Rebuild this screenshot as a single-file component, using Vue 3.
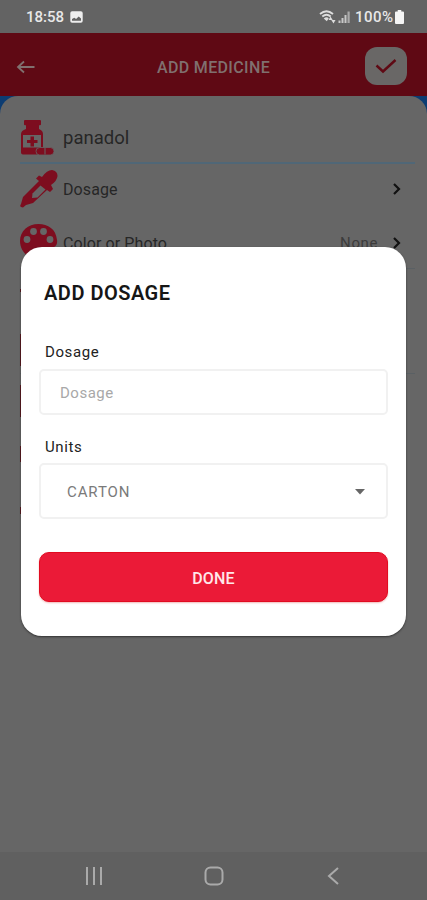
<script setup>
import { ref } from 'vue'

const dosage = ref('')
const rows = [
  { label: 'Dosage', value: '', icon: 'dropper' },
  { label: 'Color or Photo', value: 'None', icon: 'palette' },
]
const hiddenRows = [
  { top: 289, height: 3 },
  { top: 334, height: 32 },
  { top: 385, height: 32 },
  { top: 446, height: 16 },
  { top: 507, height: 7 },
]
</script>

<template>
  <div class="screen">
    <header class="status">
      <span class="clock">18:58</span>
      <svg class="pic" viewBox="0 0 13 12"><rect x=".3" y=".2" width="12.4" height="11.6" rx="1.8" fill="#eee" /><path d="M2 9.700V8l2.300-1.200 1.800 1.200L8.700 5.600 11 7.500v2.200z" fill="#636363" /></svg>
      <span class="grow"></span>
      <svg class="signals" viewBox="0 0 33 16">
        <g fill="none" stroke="#ddd" stroke-width="1.8">
          <path d="M1 5Q7.500-.6 14 5M3.300 7.500Q7.500 4 11.700 7.500" />
        </g>
        <path d="M4.700 9.500Q7.500 7 9.800 9.200L7.800 12.200zM11.500 7.500l2.200 3.500H9.500zM14.500 14.500l-2.200-3.500h4.200z" fill="#ddd" />
        <path d="M19.500 11.500h2V14h-2zM22.500 9h2v5h-2zM25.500 6h2v8h-2z" fill="#c8c8c8" /><path d="M28.500 2.500h2.200V14h-2.200z" fill="#aaa" />
      </svg>
      <span class="percent">100%</span>
      <svg class="battery" viewBox="0 0 9 14"><path d="M2.700 0h3.600v1.600H8q1 0 1 1V13q0 1-1 1H1q-1 0-1-1V2.600q0-1 1-1h1.700z" fill="#f5f5f5" /></svg>
    </header>

    <div class="toolbar">
      <svg class="back" viewBox="0 0 20 16"><path d="M18.500 8H2M8 2.500 2 8l6 5.500" /></svg>
      <h1>ADD MEDICINE</h1>
      <button class="confirm"><svg viewBox="0 0 24 20"><path d="m2.500 9.500 6.500 6L21.500 4" /></svg></button>
    </div>

    <div class="body">
      <main class="sheet">
        <div class="name-row">
          <svg class="icon bottle" viewBox="0 0 34 36">
            <path d="M5 0h15q1 0 1 1.300v3q0 1-1 1H5q-1 0-1-1v-3Q4 0 5 0zM6 5h13v4q4 1.500 4 5v20.500H3q-2 0-2-2V14q0-3.500 5-5z" />
            <path d="M3 15h18v12.500H3z" fill="#666" /><path d="M10.500 16.500H14V20h3.500v3H14v3.500h-3.500V23H7v-3h3.500z" />
            <rect x="16" y="27.500" width="18" height="7.500" rx="3.700" stroke="#666" stroke-width=".8" /><path d="M25 28v6.500" stroke="#666" />
          </svg>
          <span class="name">panadol</span>
        </div>
        <div v-for="row in rows" :key="row.label" class="row" :class="row.icon">
          <svg v-if="row.icon === 'dropper'" class="icon" viewBox="0 0 38 38">
            <path d="M1 37q-1.500-1 0-3l2-7L19 11l-3-2.500 3-3 3 1.500q5-7 10-7 5.500 1 5.500 6-.5 5-6.500 9l2 4-3 3-3-2-14 13-7 2-3 2.500z" />
            <path d="m20.500 15.500 5 4-8 8-5.500.5.500-4.500z" fill="#666" />
          </svg>
          <svg v-else class="icon" viewBox="0 0 38 38">
            <path d="M18.500 0C8 0 0 7 0 17s8 18 18 18c5 0 4-4 3-6-1-4 2-5 6-5 6 0 11-1 10-8C36 5 28 0 18.500 0z" />
            <g fill="#666"><circle cx="7" cy="15.500" r="3.400" /><circle cx="13.500" cy="7.500" r="3.400" /><circle cx="23.500" cy="7.500" r="3.400" /><circle cx="30" cy="15.500" r="3.400" /></g>
          </svg>
          <span class="label">{{ row.label }}</span>
          <span class="value">{{ row.value }}</span>
          <svg class="chevron" viewBox="0 0 8 12"><path d="m1 1 5 5-5 5" /></svg>
        </div>
        <div class="rest"></div>
      </main>
    </div>

    <nav>
      <svg viewBox="0 0 20 20"><path d="M3 1v18M10 1v18M17 1v18" /></svg>
      <svg viewBox="0 0 20 20"><rect x="1.500" y="1.500" width="17" height="17" rx="5" /></svg>
      <svg viewBox="0 0 20 20"><path d="m15 2-9 8 9 8" /></svg>
    </nav>

    <i v-for="item in hiddenRows" :key="item.top" class="sliver" :style="{ top: item.top + 'px', height: item.height + 'px' }"></i>

    <section class="dialog">
      <h2>ADD DOSAGE</h2>
      <label for="dose">Dosage</label>
      <input id="dose" v-model="dosage" placeholder="Dosage">
      <label class="units">Units</label>
      <div class="select">
        <span>CARTON</span>
        <svg viewBox="0 0 10 6"><path d="M0 0h10L5 5.500z" /></svg>
      </div>
      <button class="done">DONE</button>
    </section>
  </div>
</template>

<style>
body { margin: 0; }
</style>

<style scoped>
* { box-sizing: border-box; }
.screen { position: relative; width: 427px; height: 900px; display: flex; flex-direction: column; overflow: hidden; background: #666; font-family: Roboto, "Liberation Sans", sans-serif; }
svg { flex: none; }
.grow { flex: 1; }
.status { height: 33px; display: flex; align-items: center; padding: 1px 23.500px 0 26px; background: #636363; color: #e8e8e8; font-size: 15px; font-weight: 500; }
.pic { width: 13px; height: 12px; margin-left: 6px; }
.signals { width: 33px; height: 16px; margin-right: 3px; }
.percent { letter-spacing: .5px; }
.battery { width: 9px; height: 14px; margin-left: 1px; }
.toolbar { height: 63px; display: flex; align-items: center; padding: 3px 20px 0 16px; background: #5f0914; }
.back { width: 20px; height: 16px; margin-top: 1px; fill: none; stroke: #80706f; stroke-width: 1.800; }
h1 { flex: 1; margin: 2px 0 0 26px; text-align: center; font-size: 16px; font-weight: 500; letter-spacing: .35px; color: #80706f; }
.confirm { width: 42px; height: 38px; display: grid; place-items: center; padding: 0; border: 0; border-radius: 12px; background: #696766; }
.confirm svg { width: 24px; height: 20px; fill: none; stroke: #5f0914; stroke-width: 2.400; }
.body { flex: 1; background: linear-gradient(#0c3c72 0 30px, #666 30px); }
.sheet { height: 100%; border-radius: 18px 18px 0 0; background: #666; padding: 0 12px 0 20px; }
.icon { width: 38px; height: 38px; fill: #7d0d1f; }
.name-row { height: 68px; display: flex; align-items: center; padding-top: 17px; border-bottom: 2px solid #506777; }
.bottle { width: 34px; height: 36px; margin-right: 9px; }
.name { font-size: 18.500px; color: #262626; }
.row { height: 50px; display: flex; align-items: center; padding-right: 14px; }
.palette { height: 55px; border-bottom: 1px solid #5a6064; padding-top: 4px; }
.label { margin-left: 5px; font-size: 16px; letter-spacing: .1px; color: #262626; }
.value { margin-left: auto; margin-right: 15px; font-size: 15px; letter-spacing: .6px; color: #3c3c3c; }
.chevron { width: 8px; height: 12px; fill: none; stroke: #111; stroke-width: 2.200; }
.rest { height: 105px; border-bottom: 1px solid #5a6064; }
nav { height: 48px; display: flex; align-items: center; justify-content: space-between; padding: 0 84px; background: #606060; }
nav svg { width: 20px; height: 20px; fill: none; stroke: #aaa; stroke-width: 2; }
.sliver { position: absolute; left: 20px; width: 4px; background: #550d14; }
.dialog { position: absolute; left: 21px; top: 247px; width: 385px; height: 389px; display: flex; flex-direction: column; align-items: stretch; padding: 33px 18px; border-radius: 21px; background: #fff; box-shadow: 0 1px 2px #333; }
h2 { margin: 0 0 0 5px; height: 26px; line-height: 26px; font-size: 20px; font-weight: 600; letter-spacing: .5px; color: #161616; }
label { margin: 36px 0 7px 6px; height: 20px; line-height: 20px; font-size: 15px; letter-spacing: .6px; color: #222; }
input { height: 46px; border: 2px solid #f1f1f1; border-radius: 5px; padding: 2px 19px 0; font: 15px Roboto, sans-serif; letter-spacing: .5px; background: #fff; }
input::placeholder { color: #a8a8a8; opacity: 1; }
.units { margin-top: 22px; margin-bottom: 6px; }
.select { height: 56px; display: flex; align-items: center; justify-content: space-between; padding: 1px 21px 0 26px; border: 2px solid #f1f1f1; border-radius: 5px; font-size: 15px; letter-spacing: .9px; color: #7a7a7a; }
.select svg { width: 10px; height: 6px; fill: #666; }
.done { margin-top: 33px; height: 50px; padding: 2px 0 0; border: 1px solid #e10b20; border-radius: 10px; background: #eb1a37; color: #ffe7ea; font: 500 16px Roboto, sans-serif; letter-spacing: .2px; box-shadow: 0 1px 2px #f1b8b8; }
</style>
